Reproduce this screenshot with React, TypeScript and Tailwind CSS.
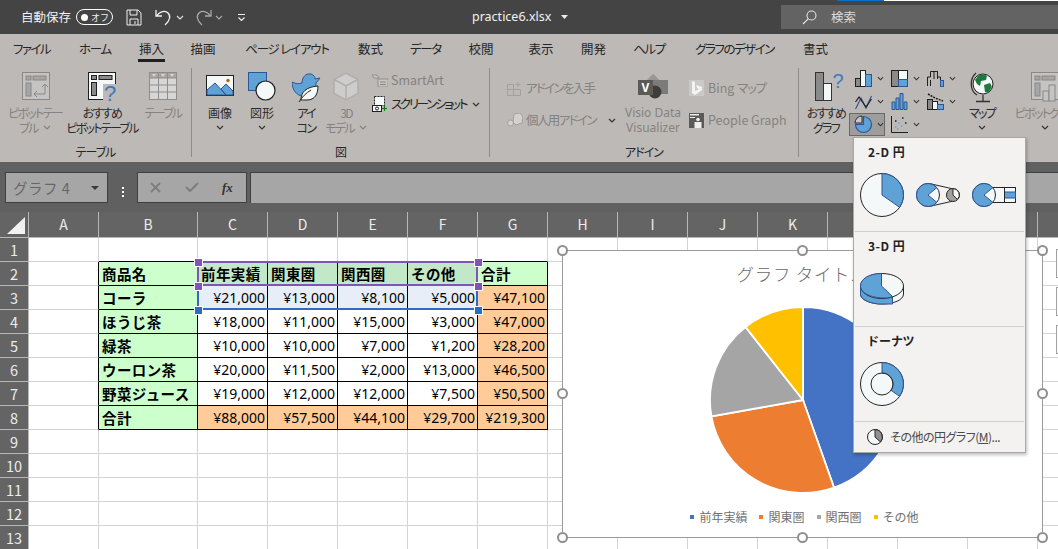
import type { ReactNode } from "react";

const BLUE = "#5fa2d6";
const BLUE_LINE = "#2f5597";

function Chevron({ color = "#333", className = "" }: { color?: string; className?: string }) {
  return (
    <svg width="8" height="5" viewBox="0 0 8 5" className={className}>
      <path d="M1 1l3 3 3-3" fill="none" stroke={color} strokeWidth="1.2" />
    </svg>
  );
}

function TitleBar() {
  return (
    <div className="h-[34px] bg-[#444444] flex items-center text-[#f2f2f2] shrink-0">
      <span className="ml-[21px] w-[55px] text-[12.5px]">自動保存</span>
      <span className="w-[37px] h-[16px] rounded-full border border-white flex items-center justify-between pl-[4px] pr-[3px]">
        <span className="w-[7px] h-[7px] rounded-full bg-white" />
        <span className="text-[9px] leading-none">オフ</span>
      </span>
      <svg width="16" height="17" viewBox="0 0 16 17" className="ml-[13px]">
        <path d="M1 1h11l3 3v12H1zM4 1v5h7V1M4 16v-6h8v6M9 12v3" fill="none" stroke="#eee" strokeWidth="1" />
      </svg>
      <svg width="17" height="18" viewBox="0 0 17 18" className="ml-[13px]">
        <path d="M1 2v6h6M1.5 8C4 4 9 2 12.5 4.500c3.500 3 3 7.500-2.500 12.500" fill="none" stroke="#f2f2f2" strokeWidth="1.3" />
      </svg>
      <Chevron color="#ddd" className="ml-[4px]" />
      <svg width="17" height="18" viewBox="0 0 17 18" className="ml-[11px]">
        <path d="M16 2v6h-6M15.500 8C13 4 8 2 4.500 4.500 1 7.500 1.500 12 7 17" fill="none" stroke="#a8a8a8" strokeWidth="1.3" />
      </svg>
      <Chevron color="#a8a8a8" className="ml-[3px]" />
      <svg width="9" height="9" viewBox="0 0 9 9" className="ml-[14px]">
        <path d="M1 1.500h7M1.500 4.500l3 3 3-3" fill="none" stroke="#eee" strokeWidth="1.200" />
      </svg>
      <span className="ml-[226px] w-[81px] text-[12.500px] font-['Noto_Sans',sans-serif] whitespace-nowrap">practice6.xlsx</span>
      <svg width="7" height="4" viewBox="0 0 7 4" className="ml-[8px]">
        <path d="M0 0h7L3.500 4z" fill="#eee" />
      </svg>
      <div className="ml-[213px] flex-1 h-[24px] bg-[#636363] flex items-center">
        <svg width="15" height="15" viewBox="0 0 15 15" className="ml-[21px]">
          <circle cx="9.500" cy="5.500" r="4.500" fill="none" stroke="#e4e4e4" strokeWidth="1.100" />
          <path d="M6.200 8.800L1 14" stroke="#e4e4e4" strokeWidth="1.200" />
        </svg>
        <span className="ml-[14px] text-[12.5px] text-[#dcdcdc]">検索</span>
      </div>
    </div>
  );
}

const tabs = [
  { label: "ファイル", w: "w-[63px]", t: "tracking-[-1.6px]" },
  { label: "ホーム", w: "w-[64px]", t: "tracking-[-1.3px]" },
  { label: "挿入", w: "w-[49px]", t: "" },
  { label: "描画", w: "w-[54px]", t: "" },
  { label: "ページ レイアウト", w: "w-[114px]", t: "tracking-[-1.2px]" },
  { label: "数式", w: "w-[53px]", t: "" },
  { label: "データ", w: "w-[57px]", t: "tracking-[-1.3px]" },
  { label: "校閲", w: "w-[54px]", t: "" },
  { label: "表示", w: "w-[66px]", t: "" },
  { label: "開発", w: "w-[39px]", t: "" },
  { label: "ヘルプ", w: "w-[72px]", t: "tracking-[-1.3px]" },
  { label: "グラフのデザイン", w: "w-[99px]", t: "tracking-[-1.5px]" },
  { label: "書式", w: "w-[63px]", t: "" },
];

function Tabs() {
  return (
    <div className="h-[31px] flex items-start">
      {tabs.map((t) => (
        <div key={t.label} className={`${t.w} h-[31px] flex flex-col items-center shrink-0`}>
          <span className={`mt-[6px] text-[12.5px] leading-[18px] text-[#262626] whitespace-nowrap [font-feature-settings:'palt'] ${t.t}`}>{t.label}</span>
          {t.label === "挿入" && <span className="mt-[1px] w-[27px] h-[3px] bg-[#1f1f1f]" />}
        </div>
      ))}
    </div>
  );
}

function Group({ width, label, children }: { width: string; label: string; children: ReactNode }) {
  return (
    <div className={`${width} h-[89px] mt-[3px] shrink-0 border-r border-[#8f8c89] flex flex-col`}>
      <div className="h-[76px] flex">{children}</div>
      <div className="h-[13px] leading-[16px] text-center text-[12px] text-[#262626] tracking-[-1px] [font-feature-settings:'palt']">{label}</div>
    </div>
  );
}

function Big({
  width,
  icon,
  lines,
  disabled,
  chevron,
  plain,
}: {
  width: string;
  icon: ReactNode;
  lines: string[];
  disabled?: boolean;
  chevron?: boolean;
  plain?: boolean;
}) {
  const color = disabled ? "text-[#85827f]" : "text-[#2b2b2b]";
  return (
    <div className={`${width} shrink-0 flex flex-col items-center pt-[4px]`}>
      <div className="h-[33px] flex justify-center items-start">{icon}</div>
      <div className={`${color} text-[12px] leading-[15px] text-center whitespace-nowrap [font-feature-settings:'palt'] ${plain ? "" : "tracking-[-1.7px]"}`}>
        {lines.map((l, i) => (
          <div key={l + i} className="flex items-center justify-center gap-[5px]">
            {l}
            {chevron && i === lines.length - 1 && <Chevron color={disabled ? "#85827f" : "#333"} />}
          </div>
        ))}
        {lines.length === 1 && chevron === undefined && (
          <div className="h-[15px] flex items-center justify-center">
            <Chevron />
          </div>
        )}
      </div>
    </div>
  );
}

function PivotIcon() {
  return (
    <svg width="28" height="28" viewBox="0 0 28 28" className="ml-[2px]">
      <rect x="0.500" y="0.500" width="27" height="27" fill="#c6c4c2" stroke="#8a8886" />
      <rect x="4" y="4" width="5" height="4" fill="#a8a6a4" stroke="#8a8886" />
      <rect x="11" y="4" width="13" height="4" fill="#a8a6a4" stroke="#8a8886" />
      <rect x="4" y="11" width="5" height="13" fill="#a8a6a4" stroke="#8a8886" />
      <path d="M12 22h11V13M20 15l3-3 3 3M15 19l-3 3 3 3" fill="none" stroke="#8a8886" />
    </svg>
  );
}

function RecPivotIcon() {
  return (
    <svg width="30" height="31" viewBox="0 0 30 31" className="ml-[2px]">
      <rect x="0.500" y="0.500" width="27" height="27" fill="#f5f8f8" stroke="#1f1f1f" />
      <rect x="3.500" y="3.500" width="5" height="4" fill="#8a8a8a" stroke="#1f1f1f" />
      <rect x="11" y="3.500" width="13" height="4" fill="#8a8a8a" stroke="#1f1f1f" />
      <rect x="3.500" y="10.500" width="5" height="13" fill="#8a8a8a" stroke="#1f1f1f" />
      <rect x="15" y="12" width="15" height="19" fill="#bdb9b6" />
      <text x="22" y="29" textAnchor="middle" fontSize="22" fill="#3f78c4" fontFamily="Liberation Sans">?</text>
    </svg>
  );
}

function TableIcon() {
  return (
    <svg width="28" height="28" viewBox="0 0 28 28">
      <rect x="0.500" y="0.500" width="27" height="27" fill="#d8d6d4" stroke="#8f8d8b" />
      <rect x="1" y="1" width="26" height="5" fill="#a8a6a4" />
      <path d="M1 6h26M1 13h26M1 20h26M9.500 1v26M18.500 1v26" stroke="#8f8d8b" />
      <path d="M3 2h4L5 5zM12 2h4l-2 3zM21 2h4l-2 3z" fill="#d8d6d4" />
    </svg>
  );
}

function ImageIcon() {
  return (
    <svg width="28" height="21" viewBox="0 0 28 21" className="mt-[3px]">
      <rect x="0.500" y="0.500" width="27" height="20" fill="#f5f8f8" stroke="#1f1f1f" />
      <path d="M1 15l8-7 11 12H1zM15 14l5-5 7 7v4h-7z" fill={BLUE} stroke={BLUE_LINE} />
      <circle cx="22" cy="5.500" r="1.700" fill="#a8690f" />
    </svg>
  );
}

function ShapesIcon() {
  return (
    <svg width="28" height="29" viewBox="0 0 28 29">
      <rect x="0.500" y="0.500" width="18" height="18" fill={BLUE} stroke={BLUE_LINE} />
      <circle cx="17.500" cy="18.500" r="9.500" fill="#f5f8f8" stroke="#1f1f1f" strokeWidth="1.200" />
    </svg>
  );
}

function BirdIcon() {
  return (
    <svg width="29" height="31" viewBox="0 0 29 31">
      <path d="M0 10c4 2 7 2 10 1 0-6 4-10 9-9 3 1 4 3 4 5l5-1-4 5c0 8-6 13-13 13C5 24 0 18 0 10z" fill={BLUE} stroke={BLUE_LINE} />
      <path d="M9 28c0-8 5-13 17-14 0 8-3 14-11 14-3 0-4 0-6 0z" fill="#f5f8f8" stroke="#1f1f1f" />
      <path d="M7 30c3-5 7-9 12-12" fill="none" stroke="#1f1f1f" />
    </svg>
  );
}

function CubeIcon() {
  return (
    <svg width="26" height="29" viewBox="0 0 26 29">
      <path d="M13 1l12 6.500v14L13 28 1 21.500v-14z" fill="#cfcdcb" stroke="#b0aeac" strokeWidth="1.500" />
      <path d="M1 7.500l12 6.500 12-6.500M13 14v14" fill="none" stroke="#b0aeac" strokeWidth="1.500" />
    </svg>
  );
}

function Line({
  icon,
  children,
  disabled,
  tight = "",
  chevron = "",
}: {
  icon: ReactNode;
  children: ReactNode;
  disabled?: boolean;
  tight?: string;
  chevron?: string;
}) {
  return (
    <div className={`h-[24px] flex items-center whitespace-nowrap text-[12.5px] [font-feature-settings:'palt'] ${disabled ? "text-[#85827f]" : "text-[#262626]"}`}>
      <span className="w-[19px] flex items-center shrink-0">{icon}</span>
      <span className={tight}>{children}</span>
      {chevron && <Chevron className={chevron} />}
    </div>
  );
}

function Mini({ children, selected }: { children: ReactNode; selected?: boolean }) {
  return (
    <div className={`h-[23px] flex items-center pl-[4px] gap-[4px] border ${selected ? "bg-[#9f9d9b] border-[#6a6866]" : "border-transparent"}`}>
      <span className="w-[19px] h-[19px] flex items-center justify-center shrink-0">{children}</span>
      <Chevron />
    </div>
  );
}

const s = { fill: "none", stroke: "#1f1f1f" };

const miniIcons = [
  <svg width="17" height="17" viewBox="0 0 17 17" key="a">
    <rect x="0.500" y="8.500" width="5" height="8" fill="#8a8a8a" stroke="#1f1f1f" />
    <rect x="5.500" y="0.500" width="5" height="16" fill="#f5f8f8" stroke="#1f1f1f" />
    <rect x="10.500" y="4.500" width="6" height="12" fill={BLUE} stroke={BLUE_LINE} />
  </svg>,
  <svg width="17" height="17" viewBox="0 0 17 17" key="b">
    <rect x="0.500" y="0.500" width="16" height="16" fill="#f5f8f8" stroke="#1f1f1f" />
    <rect x="0.500" y="0.500" width="7" height="16" fill="#8a8a8a" stroke="#1f1f1f" />
    <rect x="7.500" y="9.500" width="9" height="7" fill={BLUE} stroke={BLUE_LINE} />
  </svg>,
  <svg width="17" height="17" viewBox="0 0 17 17" key="c">
    <path d="M.5 16V7h3V1.500h7V7h3v9" {...s} />
    <path d="M3.500 16V10M7 1.500V9M10.500 1.500V9" {...s} />
    <rect x="13.500" y="10.500" width="3" height="6" fill={BLUE} stroke={BLUE_LINE} />
  </svg>,
  <svg width="17" height="17" viewBox="0 0 17 17" key="d">
    <path d="M.5 16L6 5l5 10L16.500 3" fill="none" stroke={BLUE_LINE} strokeWidth="1.200" />
    <path d="M.5 9L4 4l7 10 5.500-8" {...s} strokeWidth="1.200" />
  </svg>,
  <svg width="17" height="17" viewBox="0 0 17 17" key="e">
    <path d="M1 9h3v7.500H1zM5 5h3v11.500H5zM9 .5h3v16H9zM13 9h3v7.500h-3z" fill={BLUE} stroke={BLUE_LINE} />
  </svg>,
  <svg width="17" height="17" viewBox="0 0 17 17" key="f">
    <path d="M1 1l7 4 8 3" {...s} strokeWidth="1.500" strokeDasharray="2 1" />
    <rect x="0.500" y="6.500" width="5" height="10" fill="#8a8a8a" stroke="#1f1f1f" />
    <rect x="5.500" y="8.500" width="5" height="8" fill="#f5f8f8" stroke="#1f1f1f" />
    <rect x="10.500" y="11.500" width="6" height="5" fill={BLUE} stroke={BLUE_LINE} />
  </svg>,
  <svg width="19" height="19" viewBox="0 0 19 19" key="g">
    <path d="M9.500 1.500A8 8 0 1 1 1.500 9.500h8z" fill={BLUE} stroke={BLUE_LINE} strokeWidth="1.200" />
    <path d="M1 8A7 7 0 0 1 8 1v7z" fill="#c9c7c5" stroke="#2a2a2a" />
  </svg>,
  <svg width="17" height="17" viewBox="0 0 17 17" key="h">
    <path d="M.5 0v16.500H17" {...s} />
    <path d="M4 11h1.500M7 7h1.500M6 13h1.500M10 10h1.500" stroke={BLUE} strokeWidth="1.500" />
    <path d="M4 5h1.500M11 2h1.500M14 7h1.500" stroke="#1f1f1f" strokeWidth="1.500" />
  </svg>,
];

function Ribbon() {
  return (
    <div className="h-[128px] bg-[#bdb9b6] shrink-0 overflow-hidden">
      <Tabs />
      <div className="flex h-[97px]">
        <Group width="w-[192px]" label="テーブル">
          <div className="w-[4px] shrink-0" />
          <Big width="w-[62px]" icon={<PivotIcon />} lines={["ピボットテー", "ブル"]} disabled chevron />
          <Big width="w-[72px]" icon={<RecPivotIcon />} lines={["おすすめ", "ピボットテーブル"]} chevron={false} />
          <Big width="w-[50px]" icon={<TableIcon />} lines={["テーブル"]} disabled chevron={false} />
        </Group>
        <Group width="w-[298px]" label="図">
          <div className="w-[8px] shrink-0" />
          <Big width="w-[40px]" plain icon={<ImageIcon />} lines={["画像"]} />
          <Big width="w-[44px]" plain icon={<ShapesIcon />} lines={["図形"]} />
          <Big width="w-[44px]" icon={<BirdIcon />} lines={["アイ", "コン"]} chevron={false} />
          <Big width="w-[36px]" icon={<CubeIcon />} lines={["3D", "モデル"]} disabled chevron />
          <div className="ml-[8px] shrink-0">
            <Line
              disabled
              icon={
                <svg width="16" height="13" viewBox="0 0 16 13">
                  <path d="M0 1h5l2 3H2zM6 5h10v8H6z" fill="#c9c7c5" stroke="#85827f" strokeWidth="0.800" />
                  <path d="M8 8h6M8 10.500h6" stroke="#85827f" />
                </svg>
              }
            >
              SmartArt
            </Line>
            <Line
              tight="tracking-[-2.300px]"
              chevron="ml-[6px]"
              icon={
                <svg width="16" height="16" viewBox="0 0 16 16">
                  <rect x="2.500" y="0.500" width="10" height="9" fill="#f5f8f8" stroke="#1f1f1f" strokeDasharray="2 1" />
                  <rect x="0.500" y="9.500" width="9" height="6" fill="#f5f8f8" stroke="#1f1f1f" />
                  <circle cx="5" cy="12.500" r="1.500" {...s} />
                  <path d="M12.500 10v5M10 12.500h5" stroke="#107c10" strokeWidth="1.200" />
                </svg>
              }
            >
              スクリーンショット
            </Line>
          </div>
        </Group>
        <Group width="w-[309px]" label="アドイン">
          <div className="w-[17px] shrink-0" />
          <div className="w-[111px] shrink-0 pt-[8px] flex flex-col gap-[8px]">
            <Line
              disabled
              tight="tracking-[-1.700px]"
              icon={
                <svg width="16" height="16" viewBox="0 0 16 16">
                  <path d="M.5 4.500h6v5h-6zM.5 9.500h6v6h-6zM6.500 9.500h7v6h-7zM8.500 4.500h5M11 2v5" fill="none" stroke="#a3a09e" />
                </svg>
              }
            >
              アドインを入手
            </Line>
            <Line
              disabled
              tight="tracking-[-1.600px]"
              chevron="ml-[12px]"
              icon={
                <svg width="16" height="14" viewBox="0 0 16 14">
                  <path d="M7 1l6-1 3 4-1 6-6 2-3-3z" fill="#d4d2d0" stroke="#a3a09e" />
                  <circle cx="3.500" cy="10" r="3" fill="#d4d2d0" stroke="#a3a09e" />
                </svg>
              }
            >
              個人用アドイン
            </Line>
          </div>
          <div className="w-[70px] shrink-0 flex flex-col items-center pt-[5px]">
            <div className="h-[32px]">
              <svg width="30" height="26" viewBox="0 0 30 26">
                <path d="M15 1l6 6h9v14H21l-6 4z" fill="#7d7b79" />
                <path d="M15 1l-6 6h12z" fill="#9a9896" />
                <circle cx="17" cy="19" r="6.500" fill="#3f3d3b" />
                <rect x="0" y="7" width="15" height="15" fill="#5c5a58" />
                <text x="7.500" y="19" textAnchor="middle" fontSize="12" fontWeight="700" fill="#fff" fontFamily="Noto Sans">V</text>
              </svg>
            </div>
            <div className="text-[12px] leading-[15px] text-[#85827f] text-center font-['Noto_Sans',sans-serif] whitespace-nowrap">
              <div>Visio Data</div>
              <div>Visualizer</div>
            </div>
          </div>
          <div className="pt-[8px] flex flex-col gap-[8px] pl-[1px]">
            <Line
              disabled
              icon={
                <svg width="15" height="16" viewBox="0 0 15 16">
                  <rect width="15" height="16" fill="#cbc9c7" />
                  <path d="M3 1l3 1v9l4-2-2-1-1-3 6 2v3l-7 5-3-2z" fill="#f4f4f4" />
                </svg>
              }
            >
              Bing <span className="tracking-[-1.300px]">マップ</span>
            </Line>
            <Line
              disabled
              icon={
                <svg width="15" height="15" viewBox="0 0 15 15">
                  <rect width="15" height="15" fill="#5c5a58" />
                  <rect x="1" y="1" width="9" height="1.500" fill="#eee" />
                  <rect x="1" y="4" width="5" height="1" fill="#eee" />
                  <circle cx="9" cy="6.500" r="1.800" fill="#eee" />
                  <path d="M5.500 9h7v6h-7z" fill="#eee" />
                </svg>
              }
            >
              People Graph
            </Line>
          </div>
        </Group>
        <div className="h-[89px] mt-[3px] flex">
          <div className="w-[4px] shrink-0" />
          <Big
            width="w-[46px]"
            chevron={false}
            lines={["おすすめ", "グラフ"]}
            icon={
              <svg width="30" height="29" viewBox="0 0 30 29" className="ml-[7px]">
                <rect x="0.500" y="0.500" width="8" height="28" fill="#8a8a8a" stroke="#333" />
                <rect x="8.500" y="11.500" width="8" height="17" fill="#f5f8f8" stroke="#333" />
                <text x="23" y="16" textAnchor="middle" fontSize="20" fill="#3f78c4" fontFamily="Liberation Sans">?</text>
              </svg>
            }
          />
          <div className="grid grid-cols-[36px_36px_36px] h-[69px] w-[108px] shrink-0 -mt-[1px]">
            {miniIcons.map((ic, i) => (
              <Mini key={i} selected={i === 6}>{ic}</Mini>
            ))}
          </div>
          <Big
            width="w-[50px]"
            lines={["マップ"]}
            icon={
              <svg width="25" height="32" viewBox="0 0 25 32">
                <circle cx="13" cy="12" r="10" fill="#f5f8f8" stroke="#1f1f1f" />
                <path d="M8 4c3-2 7-2 9 0l-1 4-5 1-1 5-3-2-2-4zM14 13l6-2 2 4-4 6-3-1z" fill="#1e7a3c" />
                <path d="M6 1C-1 7 0 19 7 23M13 23v6M6 29.500h14" fill="none" stroke="#333" strokeWidth="1.300" />
              </svg>
            }
          />
          <Big
            width="w-[76px]"
            disabled
            lines={["ピボットグラフ"]}
            icon={
              <svg width="28" height="30" viewBox="0 0 28 30">
                <rect x="0.500" y="0.500" width="27" height="27" fill="#c6c4c2" stroke="#8a8886" />
                <rect x="4" y="4" width="5" height="4" fill="#a8a6a4" stroke="#8a8886" />
                <rect x="11" y="4" width="13" height="4" fill="#a8a6a4" stroke="#8a8886" />
                <rect x="4" y="11" width="5" height="13" fill="#a8a6a4" stroke="#8a8886" />
                <rect x="12" y="19" width="6" height="10" fill="#c6c4c2" stroke="#8a8886" />
                <rect x="18" y="13" width="6" height="16" fill="#c6c4c2" stroke="#8a8886" />
              </svg>
            }
          />
        </div>
      </div>
    </div>
  );
}

function FormulaBar() {
  return (
    <div className="h-[50px] bg-[#606060] pt-[10px] flex shrink-0">
      <div className="ml-[5px] w-[103px] h-[31px] bg-[#a6a6a6] border border-[#3f3f3f] flex items-center justify-between pl-[7px] pr-[8px]">
        <span className="text-[14.5px] text-[#666] tracking-[0.5px]">グラフ 4</span>
        <svg width="8" height="4" viewBox="0 0 8 4">
          <path d="M0 0h8L4 4z" fill="#3a3a3a" />
        </svg>
      </div>
      <div className="w-[29px] flex flex-col items-center justify-center gap-[2px]">
        <span className="w-[2px] h-[2px] bg-white" />
        <span className="w-[2px] h-[2px] bg-white" />
        <span className="w-[2px] h-[2px] bg-white" />
      </div>
      <div className="w-[110px] h-[31px] bg-[#a6a6a6] border border-[#3f3f3f] flex items-center pl-[12px]">
        <svg width="11" height="11" viewBox="0 0 11 11">
          <path d="M1 1l9 9M10 1l-9 9" stroke="#7d7d7d" strokeWidth="1.800" />
        </svg>
        <svg width="14" height="11" viewBox="0 0 14 11" className="ml-[24px]">
          <path d="M1 5l4 4 8-8" fill="none" stroke="#7d7d7d" strokeWidth="2" />
        </svg>
        <span className="ml-[23px] text-[13px] font-bold italic text-[#333] font-['Liberation_Serif',serif]">fx</span>
      </div>
      <div className="ml-[3px] flex-1 h-[31px] bg-[#a6a6a6] border-t border-l border-[#3f3f3f]" />
    </div>
  );
}

const columns = ["A", "B", "C", "D", "E", "F", "G", "H", "I", "J", "K", "L", "M", "N", "O", "P"];

const table = [
  ["商品名", "前年実績", "関東圏", "関西圏", "その他", "合計"],
  ["コーラ", "¥21,000", "¥13,000", "¥8,100", "¥5,000", "¥47,100"],
  ["ほうじ茶", "¥18,000", "¥11,000", "¥15,000", "¥3,000", "¥47,000"],
  ["緑茶", "¥10,000", "¥10,000", "¥7,000", "¥1,200", "¥28,200"],
  ["ウーロン茶", "¥20,000", "¥11,500", "¥2,000", "¥13,000", "¥46,500"],
  ["野菜ジュース", "¥19,000", "¥12,000", "¥12,000", "¥7,500", "¥50,500"],
  ["合計", "¥88,000", "¥57,500", "¥44,100", "¥29,700", "¥219,300"],
];

// row and col are 1-based spreadsheet indexes, col 1 = A
function cellClass(row: number, col: number) {
  const inTable = row >= 2 && row <= 8 && col >= 2 && col <= 7;
  const right = inTable || (col === 1 && row >= 2 && row <= 8) ? "border-r-black" : "border-r-[#d4d4d4]";
  const bottom = inTable || (row === 1 && col >= 2 && col <= 7) ? "border-b-black" : "border-b-[#d4d4d4]";
  let bg = "bg-white";
  if (inTable) {
    if (col === 2 || (row === 2 && col === 7)) bg = "bg-[#ccffcc]";
    else if (row === 2) bg = "bg-[#c2e8c8]";
    else if (row === 3 && col <= 6) bg = "bg-[#e8eef8]";
    else if (col === 7 || row === 8) bg = "bg-[#ffcc99]";
  }
  return `${right} ${bottom} ${bg}`;
}

function Sheet() {
  const rowNums = Array.from({ length: 13 }, (_, i) => i + 1);
  return (
    <div className="flex-1 relative overflow-hidden bg-white">
      <div className="grid grid-cols-[29px_70px_99px_repeat(14,70px)] grid-rows-[26px_repeat(13,24px)] w-max">
        <div className="bg-[#646464] border-b border-r border-[#b8b8b8] flex items-end justify-end pr-[3px] pb-[3px]">
          <svg width="18" height="17" viewBox="0 0 18 17">
            <path d="M18 0v17H0z" fill="#f2f2f2" />
          </svg>
        </div>
        {columns.map((c) => (
          <div key={c} className="bg-[#646464] border-b border-r border-[#b8b8b8] text-[#ececec] text-[14px] flex items-center justify-center">
            {c}
          </div>
        ))}
        {rowNums.map((r) => (
          <div key={r} className="contents">
            <div className="bg-[#646464] border-b border-r border-[#b8b8b8] text-[#ececec] text-[14.5px] flex items-center justify-center">
              {r}
            </div>
            {columns.map((_, ci) => {
              const col = ci + 1;
              const val = r >= 2 && r <= 8 && col >= 2 && col <= 7 ? table[r - 2][col - 2] : "";
              const isText = r === 2 || col === 2;
              return (
                <div
                  key={ci}
                  className={`border-r border-b ${cellClass(r, col)} flex items-center whitespace-nowrap text-black ${
                    isText
                      ? "justify-start pl-[3px] text-[14.5px] font-semibold tracking-[0.4px]"
                      : "justify-end pr-[2px] text-[14px] font-['Noto_Sans',sans-serif] text-[#1a1a1a]"
                  }`}
                >
                  {val}
                </div>
              );
            })}
          </div>
        ))}
      </div>

      {/* range highlight of the selected chart series */}
      <div className="absolute left-[197px] top-[49px] w-[281px] h-[25px] border-2 border-[#8055b5]" />
      <div className="absolute left-[197px] top-[73px] w-[281px] h-[25px] border-2 border-t-0 border-[#2f6bc5]" />
      <span className="absolute left-[194px] top-[46px] w-[7px] h-[7px] bg-[#8055b5] border border-white box-content" />
      <span className="absolute left-[474px] top-[46px] w-[7px] h-[7px] bg-[#8055b5] border border-white box-content" />
      <span className="absolute left-[194px] top-[70px] w-[7px] h-[7px] bg-[#8055b5] border border-white box-content" />
      <span className="absolute left-[474px] top-[70px] w-[7px] h-[7px] bg-[#8055b5] border border-white box-content" />
      <span className="absolute left-[194px] top-[94px] w-[7px] h-[7px] bg-[#2f6bc5] border border-white box-content" />
      <span className="absolute left-[474px] top-[94px] w-[7px] h-[7px] bg-[#2f6bc5] border border-white box-content" />
    </div>
  );
}

const slices = [
  { value: 21000, color: "#4472c4" },
  { value: 13000, color: "#ed7d31" },
  { value: 8100, color: "#a5a5a5" },
  { value: 5000, color: "#ffc000" },
];

function slicePath(start: number, end: number, r: number, c: number) {
  const p = (a: number) => [c + r * Math.sin(a), c - r * Math.cos(a)].map((n) => n.toFixed(2)).join(" ");
  const large = end - start > Math.PI ? 1 : 0;
  return `M${c} ${c}L${p(start)}A${r} ${r} 0 ${large} 1 ${p(end)}Z`;
}

function PieChart() {
  const total = slices.reduce((a, b) => a + b.value, 0);
  let acc = 0;
  return (
    <svg width="188" height="188" viewBox="0 0 188 188">
      {slices.map((sl) => {
        const start = (acc / total) * Math.PI * 2;
        acc += sl.value;
        const end = (acc / total) * Math.PI * 2;
        return <path key={sl.color} d={slicePath(start, end, 93, 94)} fill={sl.color} stroke="#fff" strokeWidth="1.800" />;
      })}
    </svg>
  );
}

function Handle({ className }: { className: string }) {
  return <span className={`absolute w-[11px] h-[11px] rounded-full bg-white border-2 border-[#8f8f8f] ${className}`} />;
}

function Chart() {
  const legend = [
    { label: "前年実績", c: "bg-[#4472c4]" },
    { label: "関東圏", c: "bg-[#ed7d31]" },
    { label: "関西圏", c: "bg-[#a5a5a5]" },
    { label: "その他", c: "bg-[#ffc000]" },
  ];
  return (
    <div className="absolute left-[562px] top-[250px] w-[481px] h-[288px] bg-white border border-[#9a9a9a] flex flex-col items-center">
      <div className="mt-[9px] h-[28px] leading-[28px] text-[17.5px] font-light text-[#6a6a6a] tracking-[0.7px] whitespace-nowrap">グラフ タイトル</div>
      <div className="mt-[18px]">
        <PieChart />
      </div>
      <div className="mt-[15px] ml-[4px] flex gap-[12px] text-[12px] text-[#6f6f6f] leading-[16px]">
        {legend.map((l) => (
          <div key={l.label} className="flex items-center gap-[5px] whitespace-nowrap">
            <span className={`w-[4px] h-[4px] ${l.c}`} />
            {l.label}
          </div>
        ))}
      </div>
      <Handle className="-left-[6px] -top-[6px]" />
      <Handle className="left-[234px] -top-[6px]" />
      <Handle className="-right-[6px] -top-[6px]" />
      <Handle className="-left-[6px] top-[137px]" />
      <Handle className="-right-[6px] top-[137px]" />
      <Handle className="-left-[6px] -bottom-[6px]" />
      <Handle className="left-[234px] -bottom-[6px]" />
      <Handle className="-right-[6px] -bottom-[6px]" />
    </div>
  );
}

const W = "#f5f8f8";
const K = "#262626";

function PieMenu() {
  const head = "pt-[6px] pl-[13px] text-[12px] font-bold leading-[16px] text-[#222] tracking-[0.5px]";
  const line = "border-b border-[#d0cfce] mx-[1px]";
  return (
    <div className="absolute left-[853px] top-[137px] w-[173px] h-[316px] bg-[#f3f2f1] border border-[#a9a8a7] shadow-[1px_2px_3px_rgba(0,0,0,0.25)]">
      <div className={`h-[94px] ${line}`}>
        <div className={head}>2-D 円</div>
        <div className="mt-[13px] pl-[5px] flex items-center gap-[12px]">
          <svg width="44" height="44" viewBox="0 0 44 44">
            <circle cx="22" cy="22" r="21.500" fill={W} stroke={K} />
            <path d="M22 .5A21.500 21.500 0 0 1 39.600 34.300L22 22z" fill={BLUE} stroke={BLUE_LINE} />
          </svg>
          <svg width="44" height="24" viewBox="0 0 44 24">
            <path d="M14 .7l22 5M14 23.300l22-5" stroke={K} />
            <circle cx="12" cy="12" r="11.500" fill={W} stroke={K} />
            <path d="M20.800 4.600A11.500 11.500 0 1 0 20.800 19.400L12 12z" fill={BLUE} stroke={BLUE_LINE} />
            <circle cx="37" cy="12" r="6.500" fill="#a0a0a0" stroke={K} />
            <path d="M37 5.500A6.500 6.500 0 0 1 41.500 16.500L37 12z" fill={W} stroke={K} />
          </svg>
          <svg width="44" height="24" viewBox="0 0 44 24">
            <rect x="20.500" y="4.500" width="23" height="15" fill={W} stroke={K} />
            <rect x="32.500" y="9" width="11" height="6" fill={BLUE} stroke={BLUE_LINE} />
            <path d="M32.500 4.500v15" stroke={K} />
            <circle cx="12" cy="12" r="11.500" fill={W} stroke={K} />
            <path d="M20.800 4.600A11.500 11.500 0 1 0 20.800 19.400L12 12z" fill={BLUE} stroke={BLUE_LINE} />
          </svg>
        </div>
      </div>
      <div className={`h-[95px] ${line}`}>
        <div className={head}>3-D 円</div>
        <div className="mt-[19px] pl-[5px]">
          <svg width="44" height="32" viewBox="0 0 44 32">
            <path d="M.5 13v8c0 6 10 10 21.500 10s21.500-4 21.500-10v-8z" fill={W} stroke={K} />
            <path d="M.5 13v8c0 5 8 9 18 10l14 0v-9z" fill={BLUE} stroke={BLUE_LINE} />
            <ellipse cx="22" cy="13" rx="21.500" ry="12.500" fill={W} stroke={K} />
            <path d="M21.500 .5C9 .5.5 6 .5 13c0 6 8 11 21 12 4 0 8 0 11-1.500L21.500 13z" fill={BLUE} stroke={BLUE_LINE} />
          </svg>
        </div>
      </div>
      <div className={`h-[95px] ${line}`}>
        <div className={head + " [font-feature-settings:'palt']"}>ドーナツ</div>
        <div className="mt-[13px] pl-[5px]">
          <svg width="44" height="44" viewBox="0 0 44 44">
            <circle cx="22" cy="22" r="21.500" fill={W} stroke={K} />
            <path d="M22 .5A21.500 21.500 0 0 1 39.600 34.300L31 28.300A11 11 0 0 0 22 11z" fill={BLUE} stroke={BLUE_LINE} />
            <circle cx="22" cy="22" r="11" fill="none" stroke={K} />
          </svg>
        </div>
      </div>
      <div className="h-[30px] flex items-center pl-[13px]">
        <svg width="16" height="16" viewBox="0 0 16 16">
          <circle cx="8" cy="8" r="7.500" fill={W} stroke={K} />
          <path d="M8 .5A7.500 7.500 0 0 1 13.500 13L8 8z" fill="#8f8f8f" stroke={K} />
        </svg>
        <span className="ml-[7px] text-[12px] text-[#4a4a4a] whitespace-nowrap tracking-[-0.5px] [font-feature-settings:'palt']">
          その他の円グラフ(<span className="underline">M</span>)...
        </span>
      </div>
    </div>
  );
}

export default function App() {
  return (
    <div className="relative w-[1058px] h-[549px] overflow-hidden flex flex-col bg-white font-['Noto_Sans_CJK_JP','Noto_Sans',sans-serif]">
      <TitleBar />
      <Ribbon />
      <FormulaBar />
      <Sheet />
      <Chart />
      <span className="absolute left-[1056px] top-[249px] w-[10px] h-[29px] bg-white border border-[#a0a0a0]" />
      <span className="absolute left-[1056px] top-[287px] w-[10px] h-[29px] bg-white border border-[#a0a0a0]" />
      <span className="absolute left-[1056px] top-[325px] w-[10px] h-[29px] bg-white border border-[#a0a0a0]" />
      <PieMenu />
      <div className="absolute left-[837px] top-0 w-[221px] h-[1px] bg-white" />
      <div className="absolute left-[837px] top-0 w-[47px] h-[1px] bg-[#0a6fc9]" />
    </div>
  );
}
